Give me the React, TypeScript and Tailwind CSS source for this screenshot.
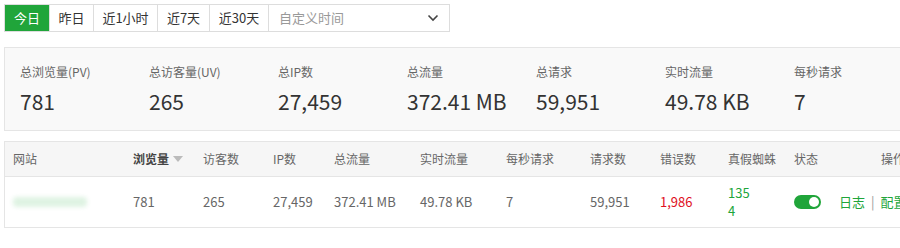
import React from "react";

const font = { fontFamily: '"Noto Sans CJK SC", "Noto Sans", sans-serif' };

const tabs = ["今日", "昨日", "近1小时", "近7天", "近30天"];
const tabW = ["w-[45px]", "w-[44px]", "w-[64px]", "w-[52px]", "w-[59px]"];

const stats = [
  ["总浏览量(PV)", "781"],
  ["总访客量(UV)", "265"],
  ["总IP数", "27,459"],
  ["总流量", "372.41 MB"],
  ["总请求", "59,951"],
  ["实时流量", "49.78 KB"],
  ["每秒请求", "7"],
];

export default function App() {
  return (
    <div className="w-[900px] h-[248px] overflow-hidden bg-white text-[#333]" style={font}>
      <div className="w-[960px] pl-[4px] pt-[4px]">
        {/* date filter */}
        <div className="flex h-[28px] w-[446px] border border-[#ddd] text-[13px]">
          {tabs.map((t, i) => (
            <div
              key={t}
              className={
                "flex items-center justify-center border-r border-[#ddd] " +
                tabW[i] +
                (i === 0 ? " bg-[#20a53a] text-white border-[#20a53a]" : " text-[#333]")
              }
            >
              {t}
            </div>
          ))}
          <div className="flex flex-1 items-center justify-between pl-[10px] pr-[10px] text-[#999]">
            <span>自定义时间</span>
            <svg width="12" height="8" viewBox="0 0 12 8" fill="none">
              <path d="M1.5 1.5 L6 6 L10.5 1.5" stroke="#444" strokeWidth="1.6" />
            </svg>
          </div>
        </div>

        {/* summary */}
        <div className="mt-[15px] flex h-[84px] w-[920px] border border-[#e5e5e5] bg-[#f9f9f9] pl-[15px] pt-[15px]">
          {stats.map(([l, v]) => (
            <div key={l} className="w-[129px] shrink-0">
              <div className="text-[12px] leading-[18px] text-[#666]">{l}</div>
              <div className="mt-[6px] text-[21px] leading-[28px] text-[#333]">{v}</div>
            </div>
          ))}
        </div>

        {/* table */}
        <div className="mt-[10px] w-[950px] border border-[#e5e5e5] text-[12px] text-[#666]">
          <div className="flex h-[35px] items-center border-b border-[#e5e5e5] bg-[#f6f6f6] *:shrink-0">
            <div className="w-[128px] pl-[8px]">网站</div>
            <div className="flex w-[70px] items-center font-bold text-[#444]">
              浏览量
              <svg className="ml-[4px]" width="10" height="6" viewBox="0 0 10 6">
                <path d="M0 0 H10 L5 6 Z" fill="#bbb" />
              </svg>
            </div>
            <div className="w-[70px]">访客数</div>
            <div className="w-[61px]">IP数</div>
            <div className="w-[86px]">总流量</div>
            <div className="w-[86px]">实时流量</div>
            <div className="w-[84px]">每秒请求</div>
            <div className="w-[70px]">请求数</div>
            <div className="w-[68px]">错误数</div>
            <div className="w-[66px]">真假蜘蛛</div>
            <div className="w-[45px]">状态</div>
            <div className="w-[100px] pl-[42px]">操作</div>
          </div>
          <div className="flex h-[50px] items-center text-[13px] *:shrink-0">
            <div className="w-[128px] pl-[8px]">
              <div className="h-[10px] w-[74px] rounded-sm bg-[#dff3e3] blur-[2px]" />
            </div>
            <div className="w-[70px]">781</div>
            <div className="w-[70px]">265</div>
            <div className="w-[61px]">27,459</div>
            <div className="w-[86px]">372.41 MB</div>
            <div className="w-[86px]">49.78 KB</div>
            <div className="w-[84px]">7</div>
            <div className="w-[70px]">59,951</div>
            <div className="w-[68px] text-[#e0101e]">1,986</div>
            <div className="w-[66px] leading-[18px] text-[#20a53a]">
              135
              <br />4
            </div>
            <div className="w-[45px]">
              <div className="flex h-[14px] w-[27px] items-center justify-end rounded-full bg-[#20a53a] pr-[2px]">
                <div className="h-[10px] w-[10px] rounded-full bg-white" />
              </div>
            </div>
            <div className="flex w-[100px] items-center text-[13px] text-[#20a53a]">
              <span>日志</span>
              <span className="mx-[6px] text-[#999]">|</span>
              <span>配置</span>
            </div>
          </div>
        </div>
      </div>
    </div>
  );
}
